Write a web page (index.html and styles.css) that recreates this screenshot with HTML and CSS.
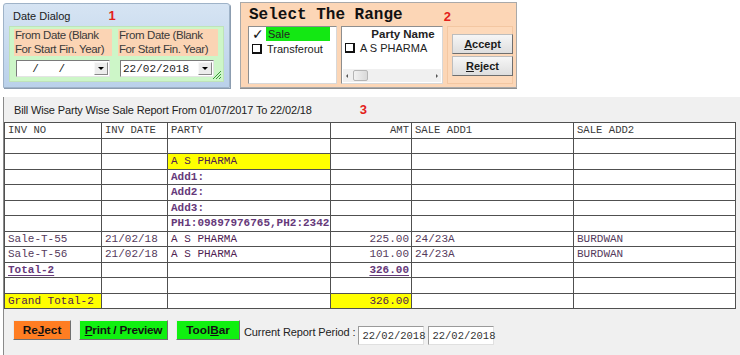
FILE: index.html
```html
<!DOCTYPE html>
<html lang="en">
<head>
    <meta charset="UTF-8">
    <title>Bill Wise Party Wise Sale Report</title>
    <link rel="stylesheet" href="styles.css">
</head>
<body>
    <div class="top">
        <div class="date-dialog">
            <div class="dlg-title">
                <span>Date Dialog</span>
                <span class="mark mark-1">1</span>
            </div>
            <div class="dlg-body">
                <div class="date-col">
                    <div class="date-label">From Date (Blank<br>For Start Fin. Year)</div>
                    <div class="combo">
                        <span class="combo-text">&nbsp;&nbsp;/&nbsp;&nbsp;&nbsp;/</span>
                        <span class="combo-btn"><i></i></span>
                    </div>
                </div>
                <div class="date-col">
                    <div class="date-label">From Date (Blank<br>For Start Fin. Year)</div>
                    <div class="combo">
                        <span class="combo-text">22/02/2018</span>
                        <span class="combo-btn"><i></i></span>
                    </div>
                </div>
                <svg class="grip" width="10" height="10" viewBox="0 0 10 10">
                    <path d="M9 1 L1 9 M9 4 L4 9 M9 7 L7 9" stroke="#3a9a3a" stroke-width="1"/>
                </svg>
            </div>
        </div>

        <div class="range-panel">
            <div class="range-title">
                <span>Select The Range</span>
                <span class="mark mark-2">2</span>
            </div>
            <div class="range-row">
                <div class="list list-type">
                    <div class="list-item"><span class="tick">&#10003;</span><span class="sel">Sale</span></div>
                    <div class="list-item"><span class="chk"></span><span>Transferout</span></div>
                </div>
                <div class="list list-party">
                    <div class="list-head">Party Name</div>
                    <div class="list-item"><span class="chk"></span><span>A S PHARMA</span></div>
                    <div class="hscroll">
                        <span class="arr arr-l"></span>
                        <span class="thumb"></span>
                        <span class="arr arr-r"></span>
                    </div>
                </div>
                <div class="btn-box">
                    <button class="sys-btn"><u>A</u>ccept</button>
                    <button class="sys-btn"><u>R</u>eject</button>
                </div>
            </div>
        </div>
    </div>

    <div class="report-panel">
        <div class="report-title">
            <span>Bill Wise Party Wise Sale Report From 01/07/2017 To 22/02/18</span>
            <span class="mark mark-3">3</span>
        </div>
        <table class="report">
            <colgroup>
                <col style="width:97px">
                <col style="width:66px">
                <col style="width:163px">
                <col style="width:81px">
                <col style="width:162px">
                <col style="width:162px">
            </colgroup>
            <tr class="head">
                <td>INV NO</td><td>INV DATE</td><td>PARTY</td><td class="num">AMT</td><td>SALE ADD1</td><td>SALE ADD2</td>
            </tr>
            <tr><td></td><td></td><td></td><td></td><td></td><td></td></tr>
            <tr><td></td><td></td><td class="yellow party">A S PHARMA</td><td></td><td></td><td></td></tr>
            <tr><td></td><td></td><td class="strong">Add1:</td><td></td><td></td><td></td></tr>
            <tr><td></td><td></td><td class="strong">Add2:</td><td></td><td></td><td></td></tr>
            <tr><td></td><td></td><td class="strong">Add3:</td><td></td><td></td><td></td></tr>
            <tr><td></td><td></td><td class="strong">PH1:09897976765,PH2:2342</td><td></td><td></td><td></td></tr>
            <tr><td>Sale-T-55</td><td>21/02/18</td><td class="party">A S PHARMA</td><td class="num">225.00</td><td>24/23A</td><td>BURDWAN</td></tr>
            <tr><td>Sale-T-56</td><td>21/02/18</td><td class="party">A S PHARMA</td><td class="num">101.00</td><td>24/23A</td><td>BURDWAN</td></tr>
            <tr><td class="strong"><u>Total-2</u></td><td></td><td></td><td class="num strong"><u>326.00</u></td><td></td><td></td></tr>
            <tr><td></td><td></td><td></td><td></td><td></td><td></td></tr>
            <tr><td class="yellow party">Grand Total-2</td><td></td><td></td><td class="num yellow party">326.00</td><td></td><td></td></tr>
        </table>

        <div class="report-bar">
            <button class="act-btn orange">Re<u>J</u>ect</button>
            <button class="act-btn green"><u>P</u>rint / Preview</button>
            <button class="act-btn green">Tool<u>B</u>ar</button>
            <span class="period-label">Current Report Period :</span>
            <span class="period-box">22/02/2018</span>
            <span class="period-box">22/02/2018</span>
        </div>
    </div>
</body>
</html>
```

FILE: styles.css
```css
body {
    margin: 0;
    background-color: #ffffff;
    font-family: "Liberation Sans", Arial, sans-serif;
    width: 740px;
    height: 355px;
    overflow: hidden;
}

.mark {
    color: #e3201b;
    font-weight: bold;
    font-size: 13px;
}

/* top area */
.top {
    display: flex;
    align-items: flex-start;
    gap: 10px;
    padding: 3px 0 0 3px;
    height: 94px;
    box-sizing: border-box;
}

.date-dialog {
    position: relative;
    width: 227px;
    height: 85px;
    box-sizing: border-box;
    border: 1px solid #9fb3c8;
    border-radius: 3px 3px 0 0;
    background: linear-gradient(#d6e4f3, #bad1ea);
    box-shadow: 1px 1px 0 #8c9db0;
}

.dlg-title {
    display: flex;
    height: 22px;
    line-height: 24px;
    padding-left: 9px;
    font-size: 11px;
    color: #1b1b1b;
}

.mark-1 {
    margin-left: 38px;
}

.dlg-body {
    position: relative;
    display: flex;
    gap: 6px;
    margin: 0 5px;
    height: 56px;
    box-sizing: border-box;
    padding: 2px 0 0 4px;
    background-color: #cdf6c8;
    border: 1px solid #bfe3b9;
}

.date-col {
    display: flex;
    flex-direction: column;
}

.date-col:first-child {
    width: 98px;
}

.date-col:nth-child(2) {
    width: 100px;
}

.date-label {
    background-color: #fbd4b4;
    font-size: 11.5px;
    letter-spacing: -0.4px;
    line-height: 13.5px;
    color: #3a3a3a;
    padding-left: 1px;
}

.combo {
    display: flex;
    justify-content: space-between;
    align-items: center;
    width: 94px;
    height: 17px;
    box-sizing: border-box;
    margin: 4px 0 0 2px;
    background-color: #ffffff;
    border-top: 1px solid #7a7a7a;
    border-left: 1px solid #7a7a7a;
    border-right: 1px solid #e4e4e4;
    border-bottom: 1px solid #e4e4e4;
    font-family: "Liberation Mono", "Courier New", monospace;
    font-size: 11px;
    color: #222;
}

.combo-text {
    padding-left: 2px;
}

.combo-btn {
    display: flex;
    justify-content: center;
    align-items: center;
    width: 14px;
    height: 13px;
    margin-right: 1px;
    background-color: #ececec;
    border: 1px solid #f8f8f8;
    border-right-color: #888;
    border-bottom-color: #888;
    box-sizing: border-box;
}

.combo-btn i {
    width: 0;
    height: 0;
    border-left: 3px solid transparent;
    border-right: 3px solid transparent;
    border-top: 3px solid #000;
}

.grip {
    position: absolute;
    right: 1px;
    bottom: 1px;
}

/* select the range */
.range-panel {
    width: 277px;
    height: 86px;
    box-sizing: border-box;
    margin-top: -1px;
    background-color: #fcd6b6;
    border: 1px solid #a9a9a9;
    box-shadow: 0 1px 0 #8f8f8f;
}

.range-title {
    display: flex;
    align-items: center;
    height: 23px;
    padding-left: 8px;
    font-family: "Liberation Mono", "Courier New", monospace;
    font-weight: bold;
    font-size: 16px;
    color: #111;
}

.mark-2 {
    font-family: "Liberation Sans", Arial, sans-serif;
    margin-left: 41px;
    margin-top: 3px;
}

.range-row {
    display: flex;
    gap: 4px;
    padding-left: 7px;
}

.list {
    height: 58px;
    box-sizing: border-box;
    background-color: #ffffff;
    border: 1px solid #8e8e8e;
    border-right-color: #d8d8d8;
    border-bottom-color: #d8d8d8;
    font-size: 11px;
    color: #222;
}

.list-type {
    width: 89px;
    padding: 0 0 0 2px;
}

.list-party {
    position: relative;
    width: 102px;
    padding-left: 2px;
}

.list-item {
    display: flex;
    align-items: center;
    height: 14px;
}

.list-type .list-item:first-child {
    margin-bottom: 1px;
}

.tick {
    width: 14px;
    font-size: 14px;
    line-height: 14px;
    font-family: "DejaVu Sans", sans-serif;
    color: #111;
    padding-left: 1px;
}

.sel {
    background-color: #13e813;
    width: 62px;
    height: 14px;
    line-height: 14px;
    padding-left: 2px;
}

.chk {
    width: 7px;
    height: 7px;
    border: 1px solid #111;
    border-right-width: 2px;
    border-bottom-width: 2px;
    margin: 0 5px 0 1px;
}

.list-head {
    text-align: center;
    font-weight: bold;
    font-size: 11.5px;
    height: 14px;
    line-height: 15px;
    padding-left: 20px;
}

.hscroll {
    position: absolute;
    left: 1px;
    right: 1px;
    bottom: 1px;
    height: 13px;
    display: flex;
    align-items: center;
    background-color: #f0f0f0;
}

.arr {
    width: 0;
    height: 0;
    border-top: 2px solid transparent;
    border-bottom: 2px solid transparent;
}

.arr-l {
    border-right: 2px solid #555;
    margin: 0 5px 0 3px;
}

.thumb {
    width: 15px;
    height: 11px;
    box-sizing: border-box;
    border: 1px solid #b5b5b5;
    border-radius: 2px;
    background: linear-gradient(90deg, #f2f2f2, #d9d9d9);
}

.arr-r {
    border-left: 2px solid #555;
    margin-left: auto;
    margin-right: 3px;
}

.btn-box {
    display: flex;
    flex-direction: column;
    gap: 2px;
    width: 66px;
    height: 58px;
    box-sizing: border-box;
    padding: 7px 0 0 4px;
    border: 1px solid #f3c7a2;
    background-color: #fdd9ba;
}

.sys-btn {
    width: 61px;
    height: 20px;
    padding: 0;
    font-family: "Liberation Sans", Arial, sans-serif;
    font-weight: bold;
    font-size: 11px;
    color: #1a1a1a;
    background: linear-gradient(#f6f6f6, #dedede);
    border: 1px solid #bdbdbd;
    border-right-color: #6f6f6f;
    border-bottom-color: #6f6f6f;
}

/* report */
.report-panel {
    margin: 3px 0 0 3px;
    height: 258px;
    background-color: #f0f0f0;
    border-left: 1px solid #8a8a8a;
}

.report-title {
    display: flex;
    align-items: center;
    height: 25px;
    padding-left: 10px;
    font-size: 11px;
    letter-spacing: -0.15px;
    color: #222;
}

.mark-3 {
    margin-left: 48px;
    letter-spacing: 0;
}

.report {
    border-collapse: collapse;
    table-layout: fixed;
    width: 731px;
    background-color: #ffffff;
    font-family: "Liberation Mono", "Courier New", monospace;
    font-size: 11px;
    color: #553a5c;
}

.report td {
    height: 14.5px;
    padding: 0 3px;
    border: 1px solid #505050;
    white-space: nowrap;
    overflow: hidden;
    line-height: 12px;
}

.report .head td {
    color: #3a3a3a;
    font-size: 10.6px;
}

.report .num {
    text-align: right;
    padding-right: 2px;
}

.report .yellow {
    background-color: #ffff00;
}

.report .party {
    color: #4f2150;
}

.report .strong {
    font-weight: bold;
    color: #66397a;
}

.report .strong u {
    text-underline-offset: 2px;
}

.report-bar {
    display: flex;
    align-items: flex-start;
    padding: 11px 0 0 9px;
}

.act-btn {
    height: 20px;
    padding: 0;
    margin-right: 8px;
    font-family: "Liberation Sans", Arial, sans-serif;
    font-weight: bold;
    font-size: 11.8px;
    color: #111;
    border: 1px solid #e8e8e8;
    border-right-color: #707070;
    border-bottom-color: #707070;
}

.act-btn.orange {
    width: 58px;
    background-color: #ff7d22;
}

.act-btn.green {
    background-color: #10f010;
}

.act-btn.green:nth-child(2) {
    width: 89px;
    letter-spacing: -0.25px;
}

.act-btn.green:nth-child(3) {
    width: 64px;
    margin-right: 4px;
}

.period-label {
    margin-top: 6px;
    font-size: 11px;
    letter-spacing: -0.1px;
    color: #222;
    margin-right: 3px;
}

.period-box {
    width: 66px;
    height: 19px;
    box-sizing: border-box;
    margin: 6px 4px 0 0;
    padding-left: 3px;
    line-height: 18px;
    background-color: #ffffff;
    border-top: 1px solid #9a9a9a;
    border-left: 1px solid #9a9a9a;
    border-right: 1px solid #e0e0e0;
    border-bottom: 1px solid #e0e0e0;
    font-family: "Liberation Mono", "Courier New", monospace;
    font-size: 10.5px;
    color: #333;
}
```
